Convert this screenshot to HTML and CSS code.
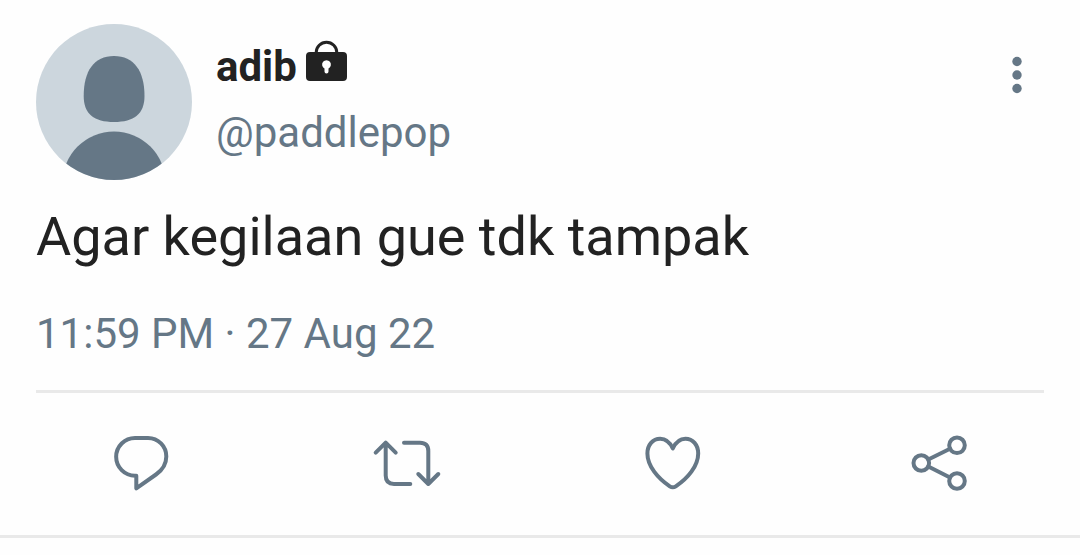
FILE: index.html
```
<!DOCTYPE html>
<html lang="id">

<head>
    <meta charset="UTF-8">
    <meta name="viewport" content="width=device-width, initial-scale=1.0">
    <title>adib - Agar kegilaan gue tdk tampak</title>
    <link rel="stylesheet" href="styles.css">
</head>

<body>
    <article class="tweet">
        <header class="tweet-header">
            <svg class="avatar" viewBox="0 0 156 156" aria-hidden="true">
                <clipPath id="avatarClip">
                    <circle cx="78" cy="78" r="78" />
                </clipPath>
                <g clip-path="url(#avatarClip)">
                    <rect class="avatar-bg" width="156" height="156" />
                    <path d="M78 32C98 32 108.5 47 108.5 72C108.5 90 98 98 78 98C58 98 47.7 90 47.7 72C47.7 47 58 32 78 32Z" />
                    <circle cx="78" cy="159" r="51.5" />
                </g>
            </svg>

            <div class="author">
                <div class="name">
                    <span>adib</span>
                    <svg class="lock" viewBox="0 0 42 41" role="img" aria-label="Protected account">
                        <path class="shackle" d="M11.2 14V12.5A10.3 10.3 0 0 1 31.8 12.5V14" />
                        <path fill-rule="evenodd" d="M5 12H38A4 4 0 0 1 42 16V37A4 4 0 0 1 38 41H5A4 4 0 0 1 1 37V16A4 4 0 0 1 5 12ZM19.5 28.5V31.5A2 2 0 0 0 23.5 31.5V28.5A4.4 4.4 0 1 0 19.5 28.5Z" />
                    </svg>
                </div>
                <a class="handle" href="#">@paddlepop</a>
            </div>

            <button class="menu-btn" type="button" aria-label="More options">
                <svg viewBox="0 0 54 54">
                    <circle cx="27" cy="13.5" r="4.7" />
                    <circle cx="27" cy="27" r="4.7" />
                    <circle cx="27" cy="40.5" r="4.7" />
                </svg>
            </button>
        </header>

        <p class="tweet-text">Agar kegilaan gue tdk tampak</p>
        <time class="tweet-time" datetime="2022-08-27T23:59">11:59 PM · 27 Aug 22</time>

        <div class="actions">
            <button class="action-btn" type="button" aria-label="Reply">
                <svg viewBox="0 0 72 72">
                    <path d="M31.3 61.3V48.7H30A18.8 18.8 0 0 1 30 11H43A18.3 18.3 0 0 1 61.3 29.5C61.3 37 57.5 43 51 47.5Z" />
                </svg>
            </button>
            <button class="action-btn" type="button" aria-label="Retweet">
                <svg viewBox="0 0 72 72">
                    <path d="M4.7 25.7L14.7 15.7L24.7 25.7M14.7 15.7V48.5C14.7 54 17.5 57 23 57H39.3" />
                    <path d="M47.3 47L57.3 57L67.3 47M57.3 57V24C57.3 18.5 54.5 15.7 49 15.7H33" />
                </svg>
            </button>
            <button class="action-btn" type="button" aria-label="Like">
                <svg viewBox="0 0 72 72">
                    <path d="M35.8 21.5C33 15.5 28.5 11.8 23.2 11.8C15.8 11.8 10.4 17.8 10.4 26.5C10.4 39 21 51.5 32.8 59.3Q35.8 61.3 38.8 59.3C50.6 51.5 61.2 39 61.2 26.5C61.2 17.8 55.8 11.8 48.4 11.8C43.1 11.8 38.6 15.5 35.8 21.5Z" />
                </svg>
            </button>
            <button class="action-btn" type="button" aria-label="Share">
                <svg viewBox="0 0 72 72">
                    <circle cx="18.3" cy="36" r="7.8" />
                    <circle cx="54" cy="18.3" r="7.8" />
                    <circle cx="54" cy="54" r="7.8" />
                    <path d="M25.3 32.5L47 21.8M25.3 39.5L47 50.5" />
                </svg>
            </button>
        </div>
    </article>
</body>

</html>
```

FILE: styles.css
```
* {
    margin: 0;
    padding: 0;
    box-sizing: border-box;
}

body {
    font-family: Roboto, sans-serif;
    background: #fefefe;
    color: #222;
}

svg {
    display: block;
}

button {
    background: none;
    border: none;
    cursor: pointer;
}

.tweet {
    padding-top: 24px;
    border-bottom: 3px solid #e9e9e9;
}

.tweet-header {
    display: flex;
    align-items: flex-start;
    padding: 0 36px;
}

.avatar {
    width: 156px;
    height: 156px;
    flex-shrink: 0;
    fill: #657786;
}

.avatar-bg {
    fill: #ccd6dd;
}

.author {
    flex: 1;
    padding: 10px 0 0 24px;
    font-size: 42px;
    line-height: 66px;
}

.name {
    display: flex;
    align-items: baseline;
    gap: 8px;
    font-weight: bold;
}

.lock {
    width: 42px;
    height: 41px;
    fill: #222;
}

.shackle {
    fill: none;
    stroke: #222;
    stroke-width: 3;
}

.handle {
    display: block;
    color: #657786;
    text-decoration: none;
}

.menu-btn {
    width: 54px;
    height: 54px;
    margin-top: 24px;
    fill: #657786;
}

.tweet-text {
    margin-top: 24px;
    padding: 0 36px;
    font-size: 54px;
    line-height: 66px;
}

.tweet-time {
    display: block;
    margin: 32px 36px 0;
    padding-bottom: 24px;
    border-bottom: 3px solid #e9e9e9;
    font-size: 42px;
    line-height: 64px;
    color: #657786;
}

.actions {
    display: grid;
    grid-template-columns: repeat(4, 1fr);
    justify-items: center;
    padding: 34px 8px 36px;
}

.action-btn svg {
    width: 72px;
    height: 72px;
    fill: none;
    stroke: #657786;
    stroke-width: 4;
    stroke-linecap: round;
    stroke-linejoin: round;
}
```
